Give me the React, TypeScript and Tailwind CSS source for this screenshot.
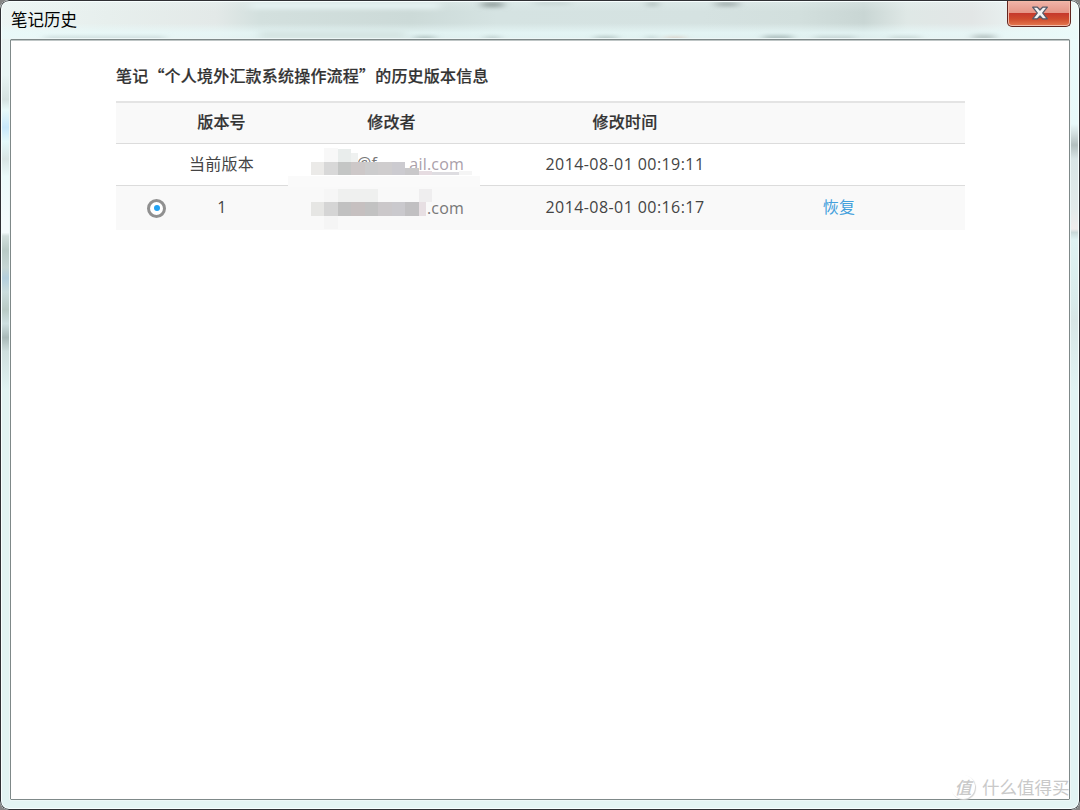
import type { ReactNode } from "react";

interface Version {
  id: string;
  label: string;
  editor: ReactNode;
  time: string;
  restorable: boolean;
}

interface Block {
  x: number;
  y: number;
  w: number;
  h: number;
  fill: string;
}

const TopGlass = () => (
  <svg className="absolute left-0 top-0" width="1080" height="40" aria-hidden="true">
    <defs>
      <linearGradient id="topGlass">
        <stop offset="0" stopColor="#edf5f4" />
        <stop offset="0.1" stopColor="#e7efed" />
        <stop offset="0.2" stopColor="#e3e9e8" />
        <stop offset="0.24" stopColor="#d3e0de" />
        <stop offset="0.38" stopColor="#ccdad8" />
        <stop offset="0.46" stopColor="#d5e3e2" />
        <stop offset="0.65" stopColor="#d5e2e1" />
        <stop offset="0.74" stopColor="#d2dfdd" />
        <stop offset="0.8" stopColor="#c9d6d4" />
        <stop offset="0.84" stopColor="#dfe8e6" />
        <stop offset="0.9" stopColor="#e2e6e6" />
        <stop offset="0.94" stopColor="#e9f1f0" />
        <stop offset="1" stopColor="#f0faf9" />
      </linearGradient>
      <linearGradient id="topSheen" x2="0" y2="1">
        <stop offset="0" stopColor="#eefafa" stopOpacity="0.3" />
        <stop offset="0.3" stopColor="#eefafa" stopOpacity="0" />
        <stop offset="0.58" stopColor="#e8fafa" stopOpacity="0" />
        <stop offset="0.82" stopColor="#e8fafa" stopOpacity="0.75" />
        <stop offset="1" stopColor="#e8fafa" stopOpacity="0.6" />
      </linearGradient>
      <filter id="soft" x="-50%" y="-100%" width="200%" height="300%">
        <feGaussianBlur stdDeviation="5 2" />
      </filter>
    </defs>
    <rect width="1080" height="40" fill="url(#topGlass)" />
    <rect width="1080" height="40" fill="url(#topSheen)" />
    <g filter="url(#soft)">
      <rect x="250" y="2" width="190" height="7" fill="#e4f1f1" />
      <rect x="482" y="2" width="21" height="5" fill="#8e9b9a" />
      <rect x="535" y="2" width="35" height="2" fill="#b5c4c3" />
      <rect x="648" y="2" width="9" height="4" fill="#a2b0af" />
      <rect x="716" y="2" width="22" height="4" fill="#99a6a5" />
      <rect x="45" y="37" width="120" height="3" fill="#bfcfd0" />
      <rect x="260" y="31" width="145" height="9" fill="#d5e5e3" />
      <rect x="415" y="37" width="20" height="3" fill="#98aaa9" />
      <rect x="485" y="37" width="15" height="3" fill="#a9bab9" />
      <rect x="595" y="37" width="22" height="3" fill="#9dafae" />
      <rect x="647" y="37" width="9" height="3" fill="#abbdbb" />
      <rect x="665" y="38" width="20" height="2" fill="#d0a68f" />
      <rect x="764" y="36" width="28" height="4" fill="#9caead" />
      <rect x="815" y="37" width="40" height="3" fill="#b3c3c2" />
      <rect x="890" y="37" width="30" height="3" fill="#b9c9c7" />
      <rect x="973" y="35" width="22" height="5" fill="#b1bfbe" />
    </g>
  </svg>
);

const SideGlass = () => (
  <svg className="absolute left-0 top-0" width="1080" height="810" aria-hidden="true">
    <defs>
      <linearGradient id="leftGlass" gradientUnits="userSpaceOnUse" x1="0" y1="40" x2="0" y2="390">
        <stop offset="0" stopColor="#ebf5f4" />
        <stop offset="0.1" stopColor="#e8f5f4" />
        <stop offset="0.17" stopColor="#d5e2e1" />
        <stop offset="0.2" stopColor="#e8fafa" />
        <stop offset="0.25" stopColor="#c8e8fb" />
        <stop offset="0.29" stopColor="#e4f9fa" />
        <stop offset="0.34" stopColor="#d8e5e4" />
        <stop offset="0.39" stopColor="#ebfafa" />
        <stop offset="0.52" stopColor="#f4fbfc" />
        <stop offset="0.55" stopColor="#f4fbfc" />
        <stop offset="0.56" stopColor="#d2dfdd" />
        <stop offset="0.6" stopColor="#b9cac6" />
        <stop offset="0.65" stopColor="#c6d6d4" />
        <stop offset="0.68" stopColor="#b4cfdd" />
        <stop offset="0.72" stopColor="#cbdddd" />
        <stop offset="0.77" stopColor="#b9cac5" />
        <stop offset="0.81" stopColor="#cedfe0" />
        <stop offset="0.85" stopColor="#a9b9b8" />
        <stop offset="0.89" stopColor="#cfdfde" />
        <stop offset="1" stopColor="#e1f3f2" />
      </linearGradient>
      <linearGradient id="rightGlass" gradientUnits="userSpaceOnUse" x1="0" y1="40" x2="0" y2="390">
        <stop offset="0" stopColor="#ebfbfb" />
        <stop offset="0.24" stopColor="#e8f9fa" />
        <stop offset="0.27" stopColor="#d0dcdd" />
        <stop offset="0.3" stopColor="#b2bfbf" />
        <stop offset="0.34" stopColor="#d8e5e6" />
        <stop offset="0.48" stopColor="#e2eaea" />
        <stop offset="0.54" stopColor="#efecec" />
        <stop offset="0.55" stopColor="#c9d9d9" />
        <stop offset="0.57" stopColor="#dff2f2" />
        <stop offset="0.74" stopColor="#d9ebeb" />
        <stop offset="0.8" stopColor="#d8e6e6" />
        <stop offset="1" stopColor="#e1f3f3" />
      </linearGradient>
    </defs>
    <rect x="1" y="39" width="9" height="770" fill="url(#leftGlass)" />
    <rect x="1070" y="39" width="9" height="770" fill="url(#rightGlass)" />
  </svg>
);

const CloseButton = () => (
  <button
    aria-label="关闭"
    className="mr-[8px] flex h-[26px] w-[64px] items-center justify-center rounded-b-[5px] border border-t-0 border-[#61251f] bg-[linear-gradient(#f0b4a9_0%,#e59687_46%,#c6392b_50%,#cf4b2d_72%,#e57a50_100%)] shadow-[inset_0_0_0_1px_#f2b9a7]"
  >
    <svg width="18" height="14" viewBox="0 0 16 14" preserveAspectRatio="none" className="mb-px ml-[2px]">
      <path
        d="M1.5 1.2h4.1L8 4l2.4-2.8h4.1L10.4 7l4.1 5.8h-4.1L8 10l-2.4 2.8H1.5L5.6 7Z"
        fill="#f3f3f4"
        stroke="#565a69"
        strokeWidth="1.2"
        strokeLinejoin="round"
      />
    </svg>
  </button>
);

const Mosaic = ({ blocks, height }: { blocks: Block[]; height: number }) => (
  <svg className="absolute left-[42px] top-0" width="192" height={height} aria-hidden="true">
    {blocks.map((b, i) => (
      <rect key={i} x={b.x} y={b.y} width={b.w} height={b.h} fill={b.fill} />
    ))}
  </svg>
);

const currentBlocks: Block[] = [
  { x: 36, y: 4, w: 14, h: 14, fill: "#f8f8f8" },
  { x: 50, y: 5, w: 13, h: 13, fill: "#e9edec" },
  { x: 63, y: 9, w: 7, h: 9, fill: "#eff1f0" },
  { x: 23, y: 18, w: 13, h: 13, fill: "#ebeae8" },
  { x: 36, y: 18, w: 14, h: 13, fill: "#d8d8d8" },
  { x: 50, y: 18, w: 13, h: 13, fill: "#c4c6c5" },
  { x: 63, y: 18, w: 14, h: 13, fill: "#cdc8c8" },
  { x: 77, y: 18, w: 13, h: 13, fill: "#cccccd" },
  { x: 90, y: 18, w: 14, h: 13, fill: "#cfcdce" },
  { x: 104, y: 18, w: 13, h: 13, fill: "#cccbd0" },
  { x: 117, y: 24, w: 14, h: 7, fill: "#c9c8ca" },
  { x: 131, y: 27, w: 13, h: 4, fill: "#e6dce1" },
  { x: 144, y: 28, w: 27, h: 3, fill: "#dedde1" },
  { x: 171, y: 27, w: 13, h: 4, fill: "#f5f5f5" },
  { x: 0, y: 32, w: 192, h: 11, fill: "#fafafa" },
];

const previousBlocks: Block[] = [
  { x: 36, y: 3, w: 14, h: 13, fill: "#f6f6f6" },
  { x: 50, y: 3, w: 40, h: 13, fill: "#eff0ef" },
  { x: 131, y: 3, w: 13, h: 13, fill: "#efeeef" },
  { x: 23, y: 16, w: 13, h: 14, fill: "#e6e6e4" },
  { x: 36, y: 16, w: 14, h: 14, fill: "#d5d5d5" },
  { x: 50, y: 16, w: 13, h: 14, fill: "#c1c1c1" },
  { x: 63, y: 16, w: 14, h: 14, fill: "#c6c0c0" },
  { x: 77, y: 16, w: 13, h: 14, fill: "#c2c2c2" },
  { x: 90, y: 16, w: 14, h: 14, fill: "#cbc8ca" },
  { x: 104, y: 16, w: 13, h: 14, fill: "#cac9cd" },
  { x: 117, y: 16, w: 14, h: 14, fill: "#c1c0c2" },
  { x: 131, y: 16, w: 7, h: 14, fill: "#e7dfe3" },
  { x: 36, y: 30, w: 14, h: 13, fill: "#f5f5f5" },
];

const versions: Version[] = [
  {
    id: "current",
    label: "当前版本",
    editor: (
      <>
        <span className="absolute left-[111px] pb-[3px] text-[#777]">@f</span>
        <span className="absolute right-[73px] pb-px text-[#aaa0aa]">ail.com</span>
        <Mosaic blocks={currentBlocks} height={43} />
      </>
    ),
    time: "2014-08-01 00:19:11",
    restorable: false,
  },
  {
    id: "1",
    label: "1",
    editor: (
      <>
        <span className="absolute right-[73px] text-[#777]">.com</span>
        <Mosaic blocks={previousBlocks} height={44} />
      </>
    ),
    time: "2014-08-01 00:16:17",
    restorable: true,
  },
];

const columns = "grid grid-cols-[81px_49px_291px_176px_252px] items-center justify-items-center whitespace-nowrap";

const HistoryTable = () => (
  <div className="w-[849px] text-[16px] tracking-[0.2px] text-[#444]">
    <div className={`${columns} h-[43px] border-b border-t-2 border-b-[#dcdcdc] border-t-[#e4e4e4] bg-[#f9f9f9] pb-[5px] font-medium text-[#333] [-webkit-text-stroke:0.2px]`}>
      <span />
      <span>版本号</span>
      <span>修改者</span>
      <span>修改时间</span>
      <span />
    </div>
    {versions.map((v) => (
      <div
        key={v.id}
        className={`${columns} ${v.restorable ? "h-[44px] bg-[#f9f9f9]" : "h-[42px] border-b border-[#dcdcdc]"}`}
      >
        <span>
          {v.restorable && (
            <span className="flex size-[19px] items-center justify-center rounded-full border-[3px] border-[#909090] bg-white">
              <span className="size-[6px] rounded-full bg-[#22a2f2]" />
            </span>
          )}
        </span>
        <span className={v.restorable ? "pb-[2px] pl-px font-['Open_Sans',sans-serif]" : "pb-[3px]"}>{v.label}</span>
        <div className="relative flex h-full w-full items-center font-['Open_Sans',sans-serif]">{v.editor}</div>
        <span className="pb-[2px] font-['Open_Sans',sans-serif] tracking-[0.42px]">{v.time}</span>
        <span className="pb-[4px]">{v.restorable && <a className="text-[#43a0dc]">恢复</a>}</span>
      </div>
    ))}
  </div>
);

const Watermark = () => (
  <div className="absolute left-[951px] top-[775px] flex items-center gap-[7px] whitespace-nowrap text-[#c9c9c9]">
    <span className="flex size-[24px] shrink-0 items-center justify-center rounded-full text-[17px] leading-6 shadow-[1px_1px_1px_#d2d2d2]">
      <span className="font-medium italic">值</span>
    </span>
    <span className="text-[17.5px] leading-6">什么值得买</span>
  </div>
);

export default function App() {
  return (
    <div className="h-[810px] w-[1080px] overflow-hidden bg-[#858585] font-['Noto_Sans_CJK_SC','Open_Sans',sans-serif]">
      <div className="relative h-full overflow-hidden rounded-[9px] bg-[#e4f4f3]">
        <TopGlass />
        <SideGlass />
        <div className="relative flex h-full flex-col rounded-[9px] border border-[#2f3034] shadow-[inset_0_0_0_1px_#f8ffff]">
          <header className="flex h-[38px] items-start justify-between pl-[10px]">
            <h1 className="pt-[6px] text-[16.5px] leading-6 text-black">笔记历史</h1>
            <CloseButton />
          </header>
          <main className="mx-[9px] mb-[9px] flex-1 rounded-[1px] border border-[#7f8989] bg-white pl-[105px] pt-[23px] shadow-[inset_0_1px_0_#bfc6c6] outline outline-[#edf7f7]">
            <h2 className="mb-[14px] text-[16px] font-medium leading-6 tracking-[0.2px] text-[#333] [-webkit-text-stroke:0.2px]">
              笔记“个人境外汇款系统操作流程”的历史版本信息
            </h2>
            <HistoryTable />
          </main>
        </div>
        <Watermark />
      </div>
    </div>
  );
}
